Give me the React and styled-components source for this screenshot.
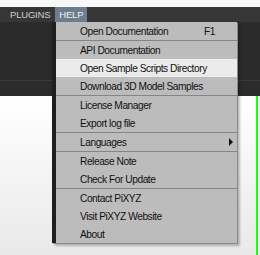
import React from 'react'
import styled, { createGlobalStyle } from 'styled-components'

const GlobalStyle = createGlobalStyle`
  html, body {
    margin: 0;
    padding: 0;
    background: #f4f4f4;
  }
`

const Screen = styled.div`
  position: relative;
  width: 260px;
  height: 255px;
  overflow: hidden;
  display: flex;
  flex-direction: column;
  font-family: 'Liberation Sans', Arial, sans-serif;
`

const TopStrip = styled.div`
  height: 7px;
  background: #f8f8f8;
`

const MenuBar = styled.div`
  height: 15px;
  display: flex;
  align-items: stretch;
  padding-left: 6px;
  gap: 1px;
  background: #363636;
`

const MenuTitle = styled.div`
  display: flex;
  align-items: center;
  padding: 0 4px;
  font-size: 9.5px;
  letter-spacing: -0.2px;
  color: ${p => (p.$active ? '#f0f0f0' : '#cfcfcf')};
  background: ${p => (p.$active ? '#6d7d8f' : 'transparent')};
`

const Toolbar = styled.div`
  height: 74px;
  background: #2b2b2b;
  display: flex;
  flex-direction: column;
`

const ToolbarTop = styled.div`
  height: 58px;
  border-bottom: 1px solid #3b3b3b;
`

const Viewport = styled.div`
  flex: 1;
  display: flex;
`

const Scene = styled.div`
  flex: 1;
  background: linear-gradient(#ffffff, #e9e9e9);
`

const Edge = styled.div`
  width: 2px;
  background: #19ff19;
`

const Gutter = styled.div`
  width: 2px;
  background: #eeeeee;
`

const Dropdown = styled.div`
  position: absolute;
  left: 52px;
  top: 22px;
  width: 181px;
  border-left: 4px solid #1f1f1f;
  background: #bcbcbc;
  box-shadow: 1px 1px 0 #8a8a8a, 3px 3px 2px rgba(0, 0, 0, 0.25);
  display: flex;
  flex-direction: column;
`

const Item = styled.div`
  height: 18px;
  display: grid;
  grid-template-columns: 24px 1fr auto 22px;
  align-items: center;
  font-size: 10.2px;
  letter-spacing: -0.45px;
  color: #111;
  background: ${p => (p.$hover ? '#ebebeb' : 'transparent')};
`

const Label = styled.span`
  grid-column: 2;
  white-space: nowrap;
`

const Shortcut = styled.span`
  grid-column: 3;
`

const Arrow = styled.span`
  grid-column: 4;
  justify-self: end;
  margin-right: 4px;
  width: 0;
  height: 0;
  border-top: 4px solid transparent;
  border-bottom: 4px solid transparent;
  border-left: 4px solid #111;
`

const Separator = styled.div`
  height: 1px;
  background: #858585;
`

const groups = [
  [{ label: 'Open Documentation', shortcut: 'F1' }],
  [
    { label: 'API Documentation' },
    { label: 'Open Sample Scripts Directory', hover: true },
    { label: 'Download 3D Model Samples' },
  ],
  [{ label: 'License Manager' }, { label: 'Export log file' }],
  [{ label: 'Languages', submenu: true }],
  [{ label: 'Release Note' }, { label: 'Check For Update' }],
  [{ label: 'Contact PiXYZ' }, { label: 'Visit PiXYZ Website' }, { label: 'About' }],
]

export default function App() {
  return (
    <Screen>
      <GlobalStyle />
      <TopStrip />
      <MenuBar>
        <MenuTitle>PLUGINS</MenuTitle>
        <MenuTitle $active>HELP</MenuTitle>
      </MenuBar>
      <Toolbar>
        <ToolbarTop />
      </Toolbar>
      <Viewport>
        <Scene />
        <Edge />
        <Gutter />
      </Viewport>

      <Dropdown>
        {groups.map((group, gi) => (
          <React.Fragment key={gi}>
            {gi > 0 && <Separator />}
            {group.map(item => (
              <Item key={item.label} $hover={item.hover}>
                <Label>{item.label}</Label>
                {item.shortcut && <Shortcut>{item.shortcut}</Shortcut>}
                {item.submenu && <Arrow />}
              </Item>
            ))}
          </React.Fragment>
        ))}
      </Dropdown>
    </Screen>
  )
}
